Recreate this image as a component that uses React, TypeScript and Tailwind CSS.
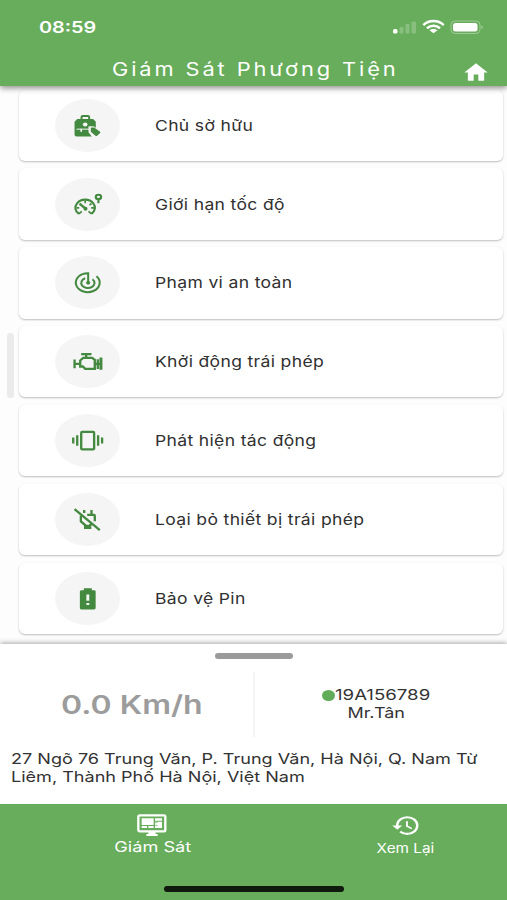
import React from "react";
import { MdHome, MdHistory } from "react-icons/md";

interface MenuRowProps {
  label: string;
  icon: React.ReactNode;
}

interface StretchProps {
  children: React.ReactNode;
  className?: string;
}

// wide lettering used all over the app
function Stretch({ children, className = "" }: StretchProps) {
  return <span className={`block w-max whitespace-nowrap ${className}`}>{children}</span>;
}

function MenuRow({ label, icon }: MenuRowProps) {
  return (
    <div className="h-[71.3px] shrink-0 flex items-center rounded-md bg-white pl-[36px] shadow-[0_1px_2px_rgba(0,0,0,0.25)]">
      <div className="w-[65px] h-[53px] shrink-0 rounded-[50%] bg-[#f5f5f5] text-[#43893f]">
        <svg viewBox="-98 -80 196 160" preserveAspectRatio="none" className="w-full h-full">
          {icon}
        </svg>
      </div>
      <Stretch className="ml-[35.5px] mt-px text-[15px] leading-5 text-[#303030] origin-left scale-x-[1.168] tracking-[0.3px]">
        {label}
      </Stretch>
    </div>
  );
}

const OwnerIcon = (
  <g fill="currentColor">
    <path d="M-18 -17V-26Q-18 -29 -14 -29H1Q5 -29 5 -26V-17" fill="none" stroke="currentColor" strokeWidth="6" />
    <path d="M-31 -20H17L25 -11V28Q25 33 19 33H-33Q-39 33 -39 28V-11Z" />
    <path d="M-33 11H14" stroke="#f5f5f5" strokeWidth="3" />
    <ellipse cx="-7" cy="-3" rx="7" ry="6" fill="#f5f5f5" />
    <path d="M-19 10V19" stroke="#f5f5f5" strokeWidth="5" />
    <path d="M3 2H18L46 20L28 39H17L3 20Z" fill="#f5f5f5" />
    <path d="M10 8Q9 6 13 6H20L38 19Q40 21 38 23L29 31Q27 33 24 31L10 19Z" />
  </g>
);

const SpeedIcon = (
  <g fill="none" stroke="currentColor" strokeWidth="6.5">
    <path d="M-26 28C-38 20 -40 7 -31 -4C-20 -18 6 -18 17 -4C26 7 23 20 12 28" />
    <path d="M-26 28L-17 21M12 28L3 21M-7 -12V-4M-33 10H-25M11 10H20M12 -3L6 2" strokeWidth="5" />
    <path d="M-24 -3L-7 12" strokeWidth="7" />
    <circle cx="-6" cy="13" r="6" fill="currentColor" stroke="none" />
    <ellipse cx="33" cy="-23" rx="8" ry="6.5" strokeWidth="6.5" />
    <path d="M33 -17V-4" />
  </g>
);

const RangeIcon = (
  <g fill="none" stroke="currentColor" strokeWidth="6">
    <path d="M27 -19A36 28.5 0 1 1 2 -28V0" />
    <path d="M15 -10A20 15.5 0 1 1 -7 -13" />
    <ellipse cx="2" cy="1" rx="6.5" ry="5.5" fill="currentColor" stroke="none" />
  </g>
);

const EngineIcon = (
  <g fill="none" stroke="currentColor" strokeWidth="7">
    <path d="M-39 -6V20M-39 7H-23M-19 -22H12M-4 -22V-11" />
    <path d="M-22 -3L-13 -11H14L22 -5V22H-7L-14 15H-22Z" />
    <path d="M22 7H40M31 -7V23" />
    <path d="M40.5 -12V25" strokeWidth="9" />
  </g>
);

const ImpactIcon = (
  <g fill="none" stroke="currentColor" strokeWidth="7">
    <rect x="-19" y="-26" width="39" height="53" rx="3" />
    <path d="M-31 -16V16M-43 -9V9M32 -16V16M44 -9V9" />
  </g>
);

const UnplugIcon = (
  <g fill="none" stroke="currentColor" strokeWidth="7">
    <path d="M-39 -31L37 32" />
    <path d="M-10 -29V-20M12 -29V-14M-1 -14H20Q22 -14 22 -10V5" />
    <path d="M-20 -12V6L-7 17V25H8V17L14 12" />
    <path d="M-9 16H9V27H-9Z" fill="currentColor" stroke="none" />
  </g>
);

const BatteryIcon = (
  <path
    fill="currentColor"
    transform="translate(-47 -38) scale(4 3.22)"
    d="M13.1 14H10.9V8H13.1M13.1 18H10.9V16H13.1M16.7 4H15V2.3H9V4H7.3C6.6 4 6 4.6 6 5.3V20.6C6 21.4 6.6 22 7.3 22H16.6C17.3 22 17.9 21.4 17.9 20.7V5.3C18 4.6 17.4 4 16.7 4Z"
  />
);

const rows: MenuRowProps[] = [
  { label: "Chủ sờ hữu", icon: OwnerIcon },
  { label: "Giới hạn tốc độ", icon: SpeedIcon },
  { label: "Phạm vi an toàn", icon: RangeIcon },
  { label: "Khởi động trái phép", icon: EngineIcon },
  { label: "Phát hiện tác động", icon: ImpactIcon },
  { label: "Loại bỏ thiết bị trái phép", icon: UnplugIcon },
  { label: "Bảo vệ Pin", icon: BatteryIcon },
];

function StatusIcons() {
  return (
    <svg viewBox="0 0 92 16" className="w-[92px] h-4" fill="#fff">
      <rect x="1" y="10" width="4.5" height="4.5" rx="1.5" />
      <g opacity="0.22">
        <rect x="7.5" y="8" width="4" height="6.5" rx="1" />
        <rect x="13.5" y="5" width="4" height="9.5" rx="1" />
        <rect x="19.5" y="2.5" width="4.5" height="12" rx="1" />
      </g>
      <g fill="none" stroke="#fff" strokeWidth="2.5">
        <path d="M31.3 6.2C37 0.7 46 0.7 51.7 6.2" />
        <path d="M35 9.2C38.8 5.8 44.2 5.8 48 9.2" />
      </g>
      <path d="M37.5 11.3C39.8 9.4 43.2 9.4 45.5 11.3L41.5 14.3Z" />
      <rect x="59" y="2" width="29" height="12.5" rx="4" fill="none" stroke="#fff" strokeOpacity="0.35" />
      <rect x="61" y="4" width="24.5" height="8.5" rx="2.5" />
      <path d="M89.5 6.5Q92 8.2 89.5 10Z" opacity="0.5" />
    </svg>
  );
}

function Header() {
  return (
    <header className="relative z-10 h-[86px] shrink-0 bg-[#67ad5b] text-white shadow-[0_2px_6px_rgba(0,0,0,0.45)]">
      <div className="flex h-[54px] items-center justify-between pl-[39px] pr-[23px]">
        <Stretch className="text-[16px] font-semibold origin-left scale-x-[1.24]">08:59</Stretch>
        <StatusIcons />
      </div>
      <div className="flex h-8 items-center justify-between pl-[112px] pr-[17px]">
        <Stretch className="-mt-[3px] text-[18.5px] leading-6 tracking-[2.45px] origin-left scale-x-[1.18]">
          Giám Sát Phương Tiện
        </Stretch>
        <MdHome preserveAspectRatio="none" className="mt-1 h-[25px] w-[28px]" />
      </div>
    </header>
  );
}

function VehicleSheet() {
  return (
    <section className="relative z-10 flex h-[160px] shrink-0 flex-col bg-white text-[#333] shadow-[0_-1px_5px_rgba(0,0,0,0.35)]">
      <div className="mt-[9px] ml-[215px] h-[5.5px] w-[78px] rounded-full bg-[#9a9a9a]" />
      <div className="mt-[13px] flex h-[65px]">
        <div className="flex w-[255px] items-center border-r-2 border-[#f4f4f4] pl-[61px]">
          <Stretch className="mt-0.5 text-[26px] font-semibold leading-8 text-[#9c9c9c] origin-left scale-x-[1.23]">
            0.0 Km/h
          </Stretch>
        </div>
        <div className="flex flex-1 flex-col items-center justify-center pr-[10px] text-[14.5px] leading-[18px]">
          <div className="flex w-[109px] items-center">
            <span className="mt-px h-[11px] w-[13px] shrink-0 rounded-[50%] bg-[#61ac58]" />
            <Stretch className="origin-left scale-x-[1.285]">19A156789</Stretch>
          </div>
          <Stretch className="scale-x-[1.24]">Mr.Tân</Stretch>
        </div>
      </div>
      <div className="mt-[13px] pl-[11px] text-[14.5px] leading-[18px]">
        <Stretch className="origin-left scale-x-[1.245]">
          27 Ngõ 76 Trung Văn, P. Trung Văn, Hà Nội, Q. Nam Từ
          <br />
          Liêm, Thành Phố Hà Nội, Việt Nam
        </Stretch>
      </div>
    </section>
  );
}

function MonitorIcon() {
  return (
    <svg viewBox="0 0 90 66" className="h-[22px] w-[30px]">
      <rect x="4" y="4" width="81" height="48" rx="4" fill="none" stroke="#fff" strokeWidth="7" />
      <path
        fill="#fff"
        d="M14 13H50V33H14ZM54 13H75V20H54ZM54 23H75V42H54ZM14 36H30V42H14ZM34 36H50V42H34ZM34 54H56V60H62V66H28V60H34Z"
      />
      <path d="M54 26H62M54 34H62" stroke="#67ad5b" strokeWidth="2" />
    </svg>
  );
}

function BottomNav() {
  return (
    <nav className="relative z-10 flex h-24 shrink-0 flex-col bg-[#67ad5b] text-white">
      <div className="grid h-[82px] grid-cols-2">
        <div className="flex flex-col items-center pl-[51px] pt-[10px]">
          <MonitorIcon />
          <Stretch className="mt-px text-[14.5px] leading-5 scale-x-[1.25]">Giám Sát</Stretch>
        </div>
        <div className="flex flex-col items-center pl-[51px] pt-[9px]">
          <MdHistory preserveAspectRatio="none" className="h-[25px] w-[30px]" />
          <Stretch className="mt-px text-[13px] leading-[18px] scale-x-[1.18]">Xem Lại</Stretch>
        </div>
      </div>
      <div className="ml-[164px] h-[5.5px] w-[180px] rounded-full bg-[#10190e]" />
    </nav>
  );
}

export default function App() {
  return (
    <div className="flex h-[900px] w-[507px] flex-col overflow-hidden bg-[#fdfdfd] font-['Inter','Noto_Sans',sans-serif]">
      <Header />
      <main className="flex h-[558px] shrink-0">
        <div className="ml-[7px] mt-[247px] h-[65px] w-[7px] shrink-0 rounded-[3px] bg-[#ebebeb]" />
        <div className="ml-[4.5px] flex w-[484px] flex-col gap-[7.6px] pt-[3.5px]">
          {rows.map((row) => (
            <MenuRow key={row.label} {...row} />
          ))}
        </div>
      </main>
      <VehicleSheet />
      <BottomNav />
    </div>
  );
}
